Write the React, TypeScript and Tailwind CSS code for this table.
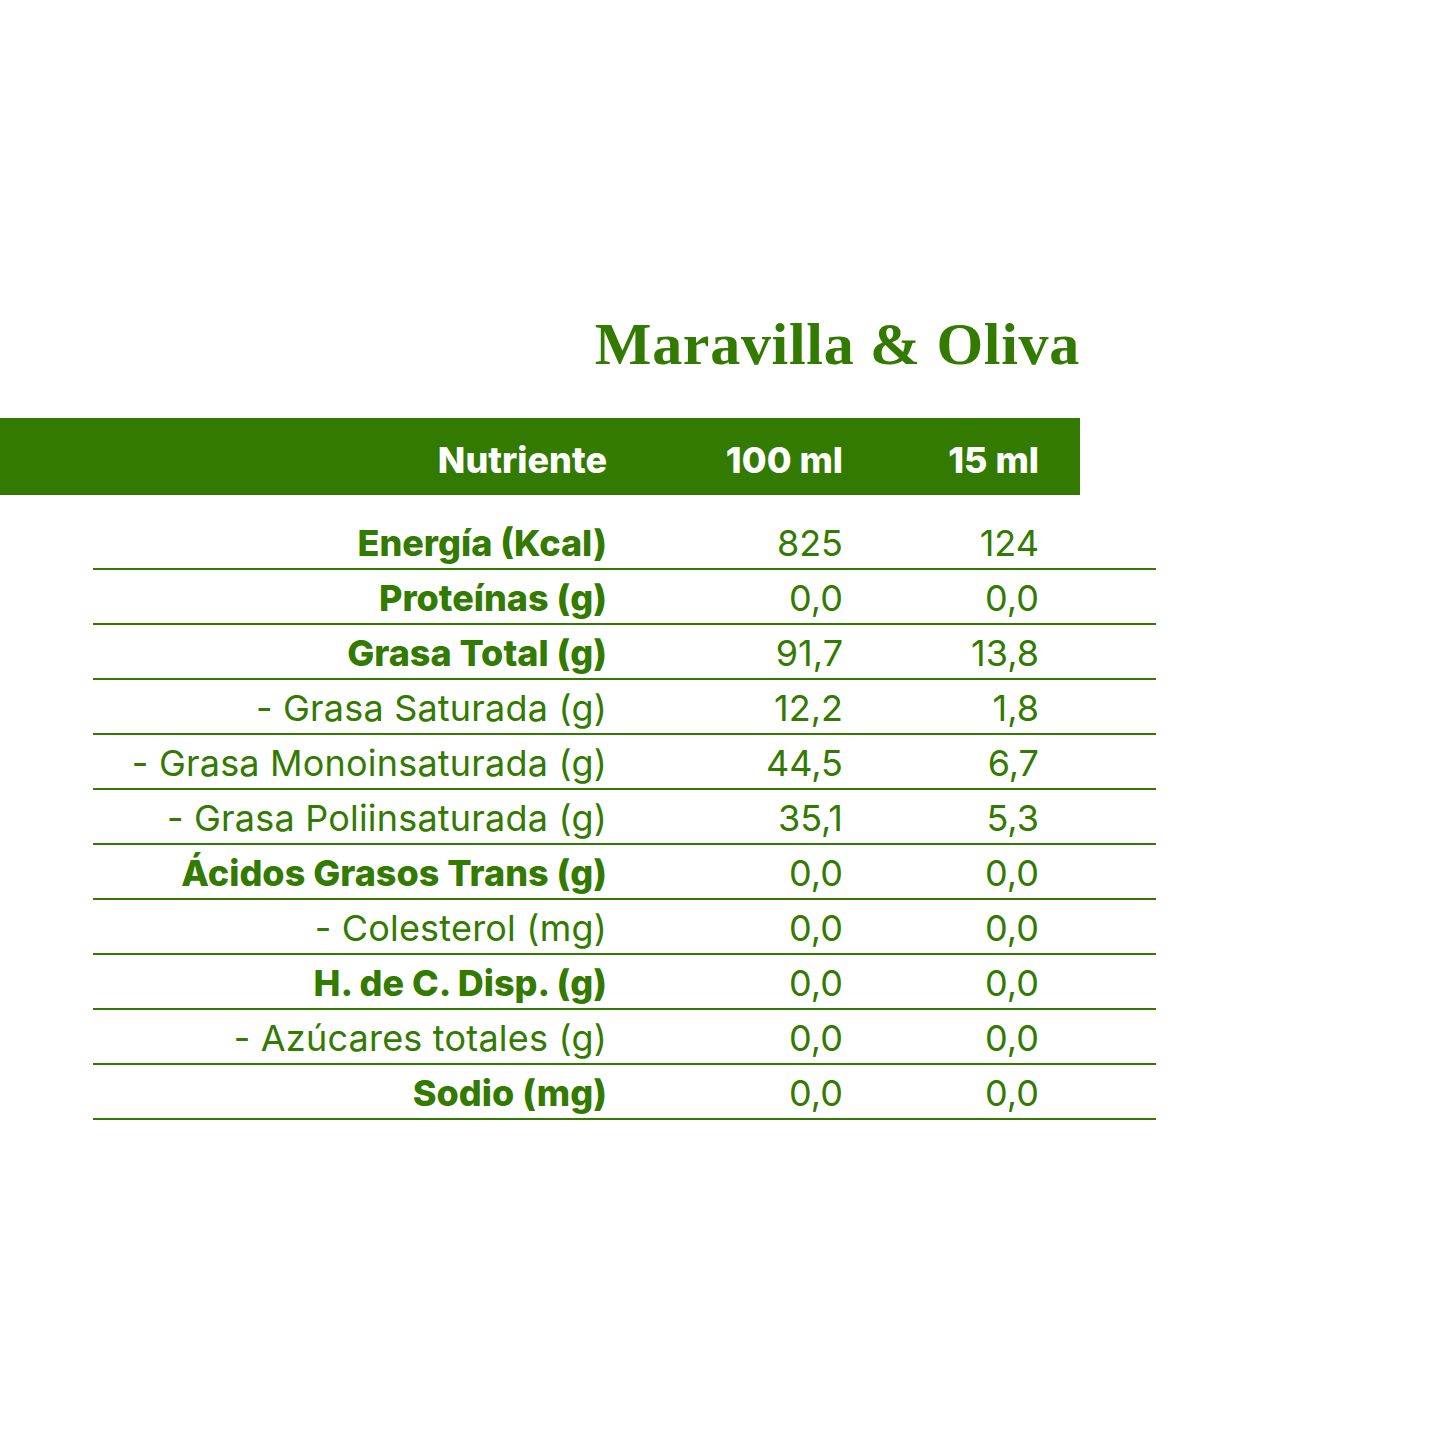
const rows: { label: string; a: string; b: string; bold: boolean }[] = [
  { label: "Energía (Kcal)", a: "825", b: "124", bold: true },
  { label: "Proteínas (g)", a: "0,0", b: "0,0", bold: true },
  { label: "Grasa Total (g)", a: "91,7", b: "13,8", bold: true },
  { label: "- Grasa Saturada (g)", a: "12,2", b: "1,8", bold: false },
  { label: "- Grasa Monoinsaturada (g)", a: "44,5", b: "6,7", bold: false },
  { label: "- Grasa Poliinsaturada (g)", a: "35,1", b: "5,3", bold: false },
  { label: "Ácidos Grasos Trans (g)", a: "0,0", b: "0,0", bold: true },
  { label: "- Colesterol (mg)", a: "0,0", b: "0,0", bold: false },
  { label: "H. de C. Disp. (g)", a: "0,0", b: "0,0", bold: true },
  { label: "- Azúcares totales (g)", a: "0,0", b: "0,0", bold: false },
  { label: "Sodio (mg)", a: "0,0", b: "0,0", bold: true },
];

export default function App() {
  return (
    <div className="w-[1445px] h-[1445px] bg-white text-[#337a00] font-['Inter',sans-serif]">
      <div className="pt-[312px] w-[1080px] text-right">
        <h1 className="font-['Liberation_Serif',serif] font-bold text-[60px] leading-[64px] tracking-[0.7px]">
          Maravilla &amp; Oliva
        </h1>
      </div>

      <div className="mt-[42px] w-[1080px] h-[77px] bg-[#337a00] text-white font-extrabold text-[36px] flex items-center pt-[6px]">
        <div className="w-[607px] text-right">Nutriente</div>
        <div className="w-[236px] text-right">100 ml</div>
        <div className="w-[196px] text-right">15 ml</div>
      </div>

      <div className="ml-[93px] w-[1063px] pt-[20px]">
        {rows.map((r) => (
          <div key={r.label} className="h-[55px] flex items-center border-b-2 border-[#337a00] text-[36px] pt-[2px]">
            <div className={`w-[514px] text-right ${r.bold ? "font-extrabold" : "font-normal tracking-[0.2px]"}`}>{r.label}</div>
            <div className="w-[236px] text-right">{r.a}</div>
            <div className="w-[196px] text-right">{r.b}</div>
          </div>
        ))}
      </div>
    </div>
  );
}
